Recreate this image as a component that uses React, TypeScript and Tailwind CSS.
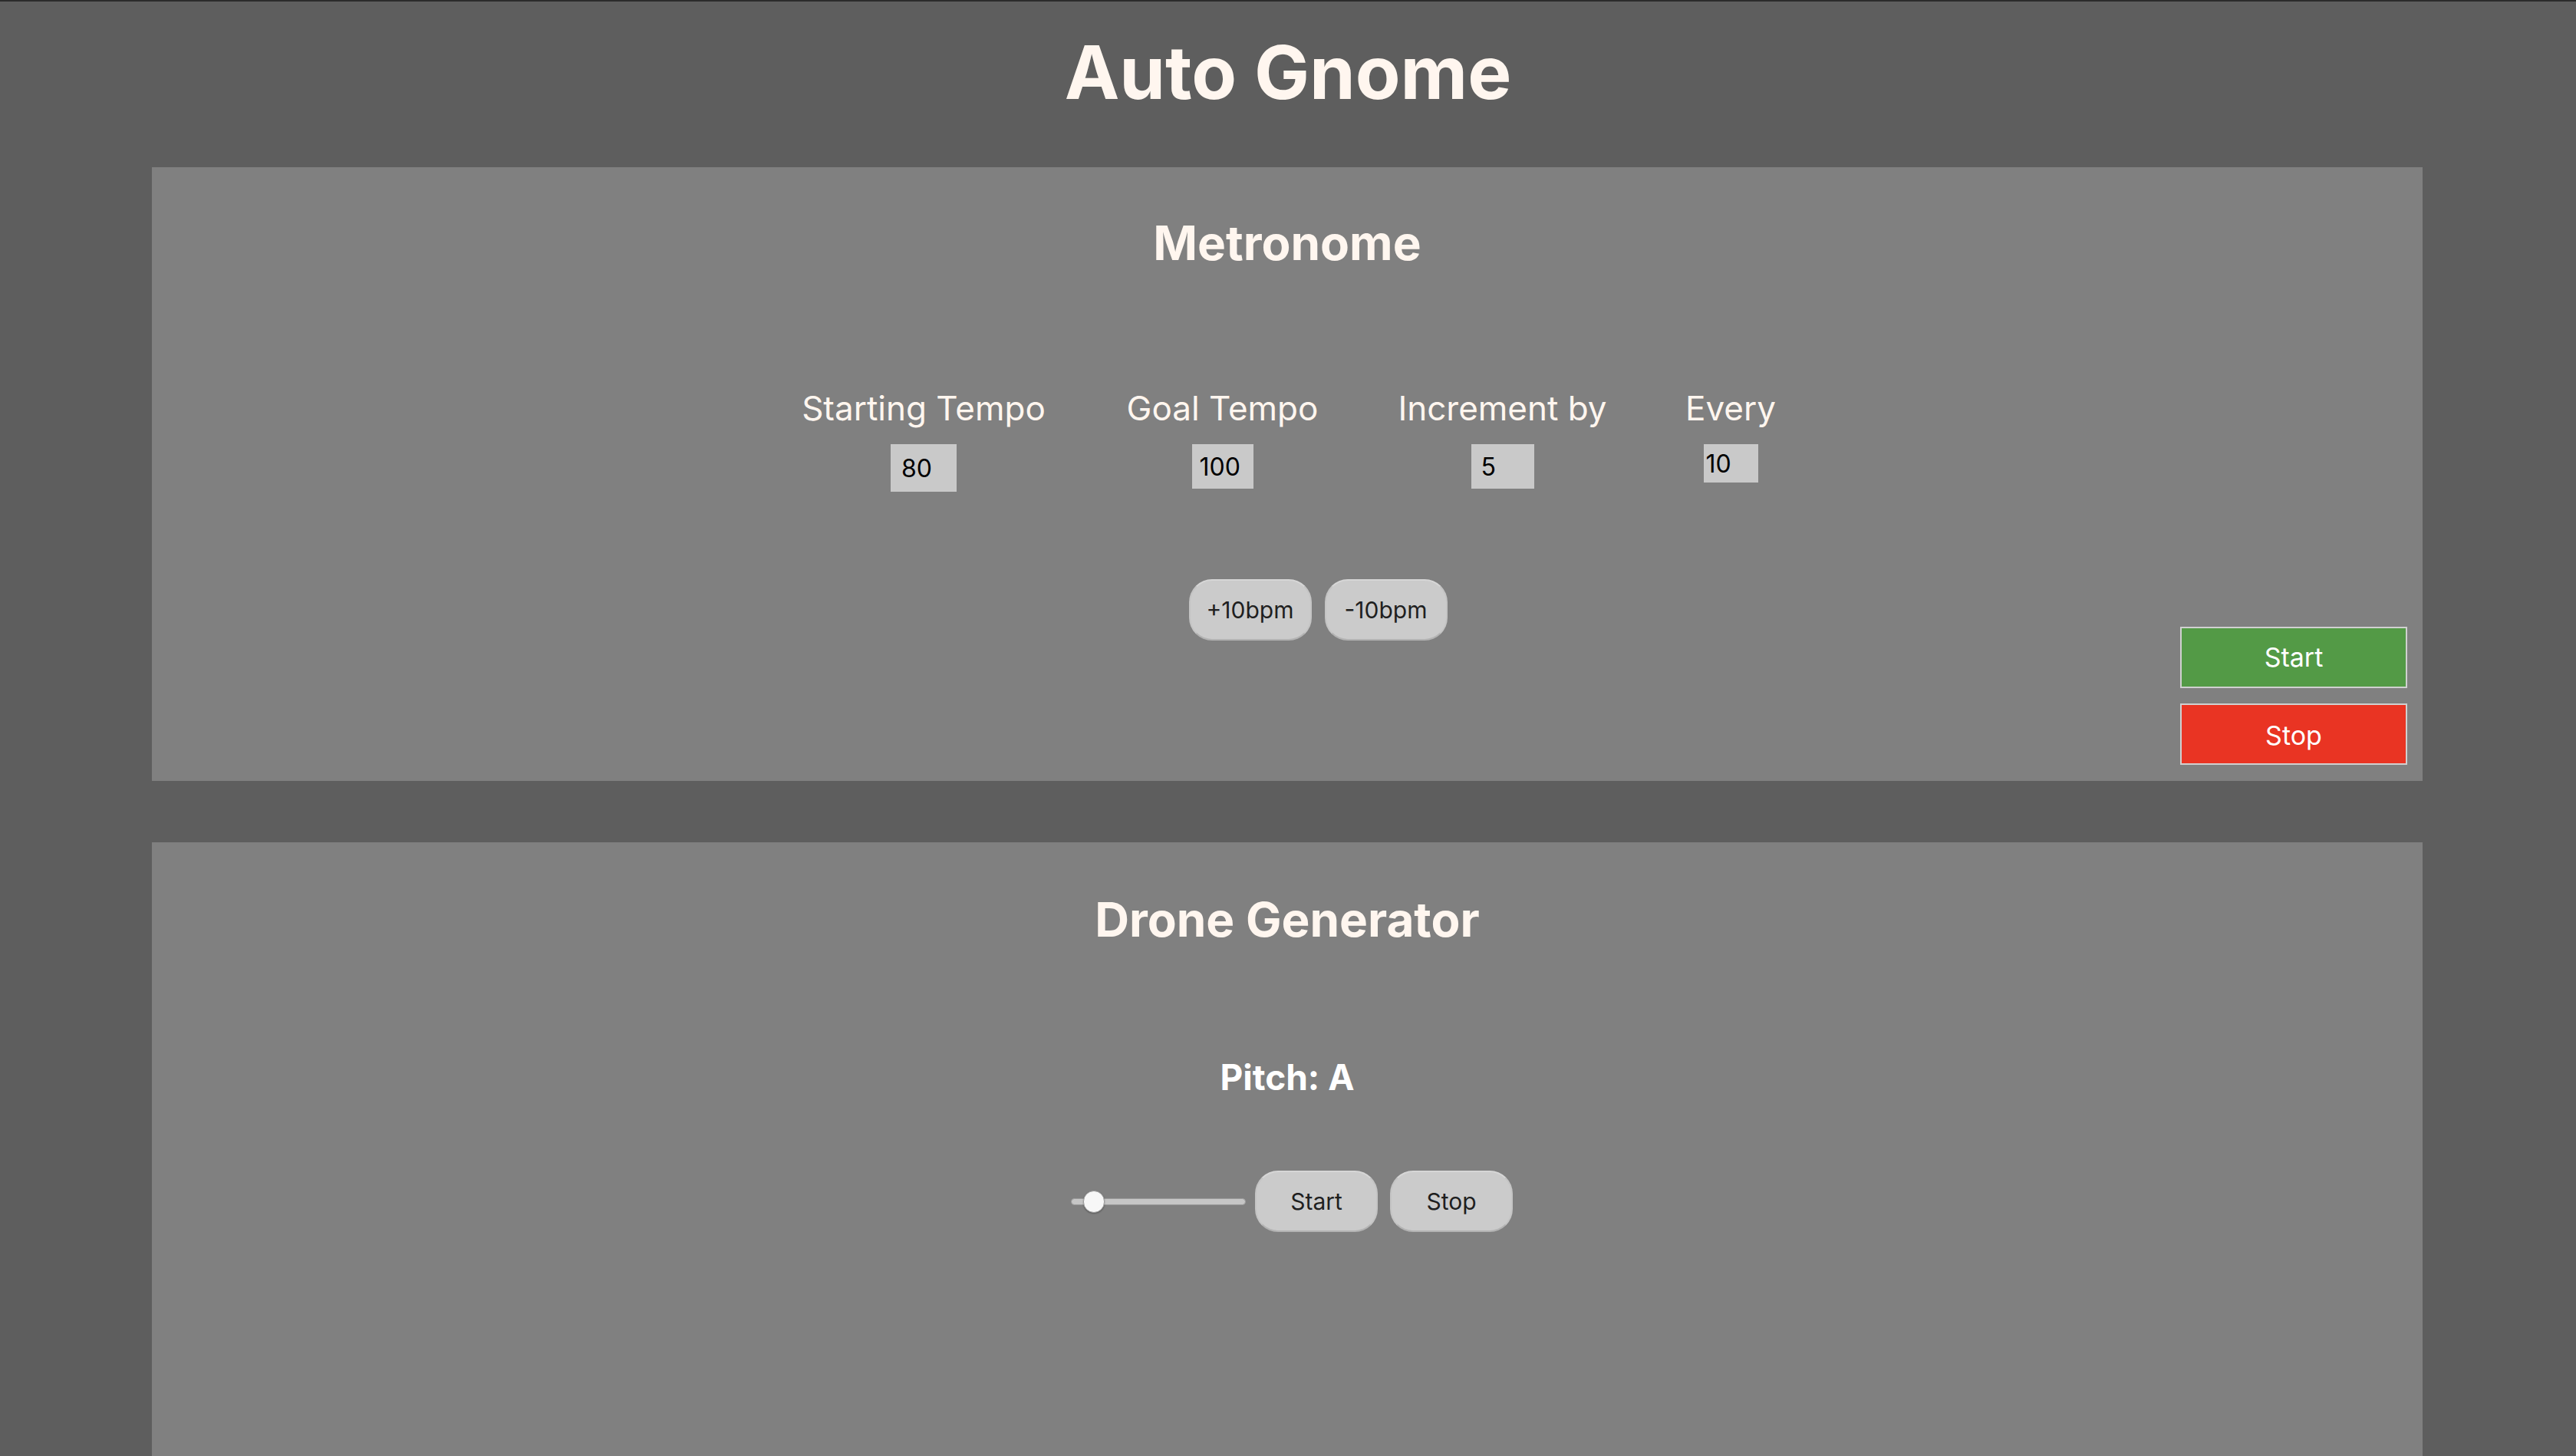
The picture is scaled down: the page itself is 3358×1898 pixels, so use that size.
import React, { useState } from 'react';

const font = { fontFamily: 'Inter, "Noto Sans", sans-serif' };

type Field = {
  label: string;
  value: string;
  col: string;
  box: string;
};

// each column is as wide as its label, input sizes differ a bit
const fields: Field[] = [
  { label: 'Starting Tempo', value: '80', col: 'w-[324px]', box: 'w-[86px] h-[62px] pl-[14px]' },
  { label: 'Goal Tempo', value: '100', col: 'w-[251px]', box: 'w-[80px] h-[58px] pl-[10px]' },
  { label: 'Increment by', value: '5', col: 'w-[275px]', box: 'w-[82px] h-[58px] pl-[13px]' },
  { label: 'Every', value: '10', col: 'w-[116px]', box: 'w-[71px] h-[50px] pl-[3px]' },
];

const PillButton = ({ children }: { children: React.ReactNode }) => (
  <button className="w-[160px] h-[80px] rounded-[30px] bg-[#cbcbcb] border-2 border-t-[#d6d6d6] border-x-[#c4c4c4] border-b-[#b3b3b3] text-[30px] text-[#1f1f1f] leading-none">
    {children}
  </button>
);

const Metronome = () => {
  const [values, setValues] = useState(fields.map((f) => f.value));

  return (
    <section className="relative w-[2960px] h-[800px] ml-[198px] bg-[#808080] pt-[68px]">
      <h2 className="text-[62px] leading-none font-bold text-center text-[#fff6ef]">Metronome</h2>

      <div className="flex justify-center gap-[102px] mt-[162px]">
        {fields.map((f, i) => (
          <div key={f.label} className={`flex flex-col items-center ${f.col}`}>
            <span className="text-[44px] leading-none whitespace-nowrap text-[#fff6ef]">{f.label}</span>
            <input
              value={values[i]}
              onChange={(e) => {
                const next = [...values];
                next[i] = e.target.value;
                setValues(next);
              }}
              className={`mt-[25px] bg-[#c9c9c9] text-black text-[32px] leading-none outline-none ${f.box}`}
              style={font}
            />
          </div>
        ))}
      </div>

      <div className="flex justify-center gap-[17px] mt-[114px] pl-[80px]">
        <PillButton>+10bpm</PillButton>
        <PillButton>-10bpm</PillButton>
      </div>

      <div className="absolute right-[20px] bottom-[21px] flex flex-col gap-[20px]">
        <button className="w-[296px] h-[80px] bg-[#539a46] border-2 border-[#d0d0d0] text-white text-[34px] leading-none">
          Start
        </button>
        <button className="w-[296px] h-[80px] pt-[3px] bg-[#e93423] border-2 border-[#d0d0d0] text-white text-[34px] leading-none">
          Stop
        </button>
      </div>
    </section>
  );
};

const DroneGenerator = () => (
  <section className="w-[2960px] h-[800px] ml-[198px] mt-[80px] bg-[#808080] pt-[70px]">
    <h2 className="text-[62px] leading-none font-bold text-center text-[#fff6ef]">Drone Generator</h2>

    <p className="mt-[151px] text-[46px] leading-none font-bold text-center text-white">Pitch: A</p>

    <div className="flex justify-center items-center mt-[99px] pl-[12px]">
      <div className="relative w-[228px] h-[9px] rounded-full bg-[#c6c6c6] border border-[#9a9a9a]">
        <div className="absolute left-[15px] top-[-11px] w-[28px] h-[29px] rounded-full bg-[#f7f7f7] border border-[#9c9c9c] shadow-[0_1px_2px_rgba(0,0,0,0.3)]" />
      </div>
      <div className="flex gap-[16px] ml-[12px]">
        <PillButton>Start</PillButton>
        <PillButton>Stop</PillButton>
      </div>
    </div>
  </section>
);

export default function App() {
  return (
    <div className="min-h-screen bg-[#5e5e5e] border-t-2 border-[#2b2b2b] overflow-hidden" style={font}>
      <h1 className="mt-[44px] text-[96px] leading-none font-bold text-center text-[#fff6ef]">Auto Gnome</h1>
      <div className="mt-[76px]">
        <Metronome />
        <DroneGenerator />
      </div>
    </div>
  );
}
